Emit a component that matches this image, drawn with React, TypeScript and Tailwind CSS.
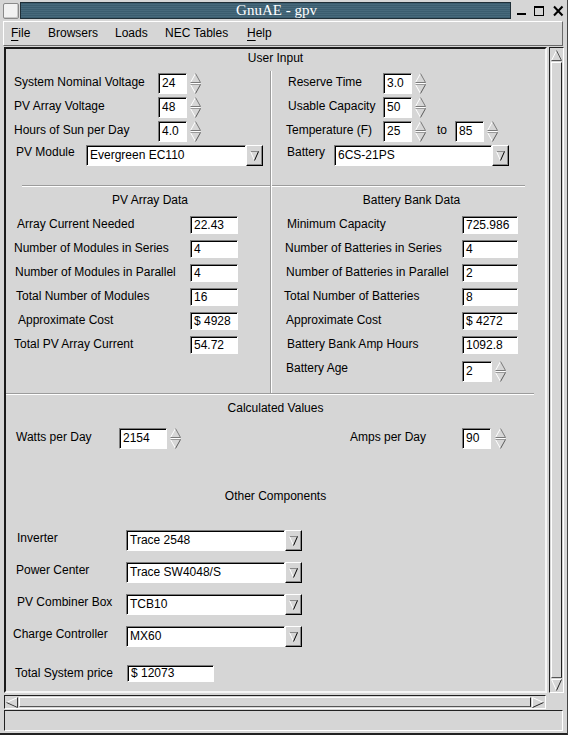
import React from "react";

function Field({ value, className }: { value: string; className: string }) {
  return (
    <div
      className={`flex items-center bg-white border border-t-[#7c7c7c] border-l-[#7c7c7c] border-b-white border-r-white shadow-[inset_1px_1px_0_#000] pl-[3px] leading-none overflow-hidden whitespace-nowrap ${className}`}
    >
      {value}
    </div>
  );
}

function Spin() {
  return (
    <svg width="11" height="21" viewBox="0 0 11 21" className="block shrink-0">
      <path d="M0.5 9.5 L5.5 0.5" stroke="#ffffff" fill="none" />
      <path d="M5.5 0.5 L10.5 9.5 L0.5 9.5" stroke="#7a7a7a" fill="none" />
      <path d="M0.5 10.5 L10.5 10.5" stroke="#ffffff" fill="none" />
      <path d="M0.5 11.5 L5.5 20.5" stroke="#ffffff" fill="none" />
      <path d="M0.5 11.5 L10.5 11.5" stroke="#9a9a9a" fill="none" />
      <path d="M10.5 11.5 L5.5 20.5" stroke="#5a5a5a" fill="none" />
    </svg>
  );
}

function ComboButton() {
  return (
    <div className="w-[17px] h-[21px] shrink-0 flex items-center justify-center bg-[#d6d6d6] border border-t-white border-l-white border-b-black border-r-black shadow-[inset_-1px_-1px_0_#8a8a8a]">
      <svg width="9" height="11" viewBox="0 0 9 11" className="block">
        <path d="M0.5 1.5 L8.5 1.5" stroke="#8a8a8a" fill="none" />
        <path d="M0.5 1.5 L4.5 10.5" stroke="#ffffff" fill="none" />
        <path d="M8.5 1.5 L4.5 10.5" stroke="#000000" fill="none" />
      </svg>
    </div>
  );
}

function Combo({ value, wide }: { value: string; wide: "pv" | "bat" | "comp" }) {
  const w = wide === "pv" ? "w-[160px]" : wide === "bat" ? "w-[158px]" : "w-[159px]";
  return (
    <div className="flex items-center">
      <Field value={value} className={`${w} h-[21px]`} />
      <ComboButton />
    </div>
  );
}

function Line({ className }: { className: string }) {
  return <div className={`h-[2px] bg-[#9c9c9c] border-b border-white ${className}`} />;
}

function SectionTitle({ children, className = "" }: { children: React.ReactNode; className?: string }) {
  return <div className={`h-[26px] flex items-center justify-center ${className}`}>{children}</div>;
}

function DataRow({ label, value, pad, labelW, fieldW }: { label: string; value: string; pad: string; labelW: string; fieldW: string }) {
  return (
    <div className="h-[24px] flex items-center">
      <div className={`${labelW} ${pad} mb-[2px] whitespace-nowrap`}>{label}</div>
      <Field value={value} className={`${fieldW} h-[18px]`} />
    </div>
  );
}

const pvData: [string, string, string][] = [
  ["Array Current Needed", "22.43", "pl-[11px]"],
  ["Number of Modules in Series", "4", "pl-[8px]"],
  ["Number of Modules in Parallel", "4", "pl-[9px]"],
  ["Total Number of Modules", "16", "pl-[10px]"],
  ["Approximate Cost", "$ 4928", "pl-[12px]"],
  ["Total PV Array Current", "54.72", "pl-[8px]"],
];

const batData: [string, string, string][] = [
  ["Minimum Capacity", "725.986", "pl-[15px]"],
  ["Number of Batteries in Series", "4", "pl-[13px]"],
  ["Number of Batteries in Parallel", "2", "pl-[14px]"],
  ["Total Number of Batteries", "8", "pl-[12px]"],
  ["Approximate Cost", "$ 4272", "pl-[14px]"],
  ["Battery Bank Amp Hours", "1092.8", "pl-[15px]"],
];

const components: [string, string, string][] = [
  ["Inverter", "Trace 2548", "pl-[11px]"],
  ["Power Center", "Trace SW4048/S", "pl-[10px]"],
  ["PV Combiner Box", "TCB10", "pl-[11px]"],
  ["Charge Controller", "MX60", "pl-[7px]"],
];

function LeftColumn() {
  return (
    <div className="w-[264px] flex flex-col">
      <div className="h-[24px] flex items-center">
        <div className="w-[152px] pl-[8px] mb-[3px] whitespace-nowrap">System Nominal Voltage</div>
        <Field value="24" className="w-[29px] h-[21px]" />
        <div className="ml-[3px]"><Spin /></div>
      </div>
      <div className="h-[24px] flex items-center">
        <div className="w-[152px] pl-[8px] mb-[3px] whitespace-nowrap">PV Array Voltage</div>
        <Field value="48" className="w-[29px] h-[21px]" />
        <div className="ml-[3px]"><Spin /></div>
      </div>
      <div className="h-[24px] flex items-center">
        <div className="w-[152px] pl-[8px] mb-[3px] whitespace-nowrap">Hours of Sun per Day</div>
        <Field value="4.0" className="w-[29px] h-[21px]" />
        <div className="ml-[3px]"><Spin /></div>
      </div>
      <div className="h-[24px] flex items-center">
        <div className="w-[80px] pl-[10px] mb-[6px] whitespace-nowrap">PV Module</div>
        <Combo value="Evergreen EC110" wide="pv" />
      </div>
      <Line className="mt-[18px] ml-[16px]" />
      <SectionTitle className="pl-[24px]">PV Array Data</SectionTitle>
      {pvData.map(([l, v, p]) => (
        <DataRow key={l} label={l} value={v} pad={p} labelW="w-[184px]" fieldW="w-[48px]" />
      ))}
    </div>
  );
}

function RightColumn() {
  return (
    <div className="flex-1 flex flex-col">
      <div className="h-[24px] flex items-center">
        <div className="w-[111px] pl-[16px] mb-[3px] whitespace-nowrap">Reserve Time</div>
        <Field value="3.0" className="w-[29px] h-[21px]" />
        <div className="ml-[3px]"><Spin /></div>
      </div>
      <div className="h-[24px] flex items-center">
        <div className="w-[111px] pl-[16px] mb-[3px] whitespace-nowrap">Usable Capacity</div>
        <Field value="50" className="w-[29px] h-[21px]" />
        <div className="ml-[3px]"><Spin /></div>
      </div>
      <div className="h-[24px] flex items-center">
        <div className="w-[111px] pl-[14px] mb-[3px] whitespace-nowrap">Temperature (F)</div>
        <Field value="25" className="w-[29px] h-[21px]" />
        <div className="ml-[3px]"><Spin /></div>
        <div className="w-[29px] pl-[11px] mb-[3px]">to</div>
        <Field value="85" className="w-[29px] h-[21px]" />
        <div className="ml-[3px]"><Spin /></div>
      </div>
      <div className="h-[24px] flex items-center">
        <div className="w-[62px] pl-[15px] mb-[6px] whitespace-nowrap">Battery</div>
        <Combo value="6CS-21PS" wide="bat" />
      </div>
      <Line className="mt-[18px] mr-[20px]" />
      <SectionTitle className="pl-[6px]">Battery Bank Data</SectionTitle>
      {batData.map(([l, v, p]) => (
        <DataRow key={l} label={l} value={v} pad={p} labelW="w-[190px]" fieldW="w-[56px]" />
      ))}
      <div className="h-[24px] flex items-center">
        <div className="w-[190px] pl-[14px] mb-[2px] whitespace-nowrap">Battery Age</div>
        <Field value="2" className="w-[30px] h-[21px] mt-[4px]" />
        <div className="ml-[3px] mt-[4px]"><Spin /></div>
      </div>
    </div>
  );
}

function TitleBar() {
  return (
    <div className="h-[21px] flex items-start pt-[2px] pl-[3px]">
      <div className="w-[16px] h-[16px] mt-[1px] bg-[#f2f2f2] border border-[#8a8a8a] rounded-[2px] shadow-[inset_-1px_-1px_0_#c8c8c8]" />
      <div className="ml-[1px] w-[491px] h-[17px] border border-[#1f2f38] bg-[repeating-linear-gradient(180deg,#3b5d6f_0px,#3b5d6f_1px,#47697b_1px,#47697b_2px)] flex items-center justify-center pl-[22px] text-white text-[15px] font-['Liberation_Serif',serif] leading-none">
        GnuAE - gpv
      </div>
      <div className="ml-[6px] flex items-start">
        <svg width="10" height="16" viewBox="0 0 10 16" className="block">
          <rect x="0" y="11" width="9" height="2" fill="#000" />
        </svg>
        <svg width="11" height="16" viewBox="0 0 11 16" className="block ml-[7px]">
          <rect x="0.5" y="4.5" width="9" height="9" stroke="#000" fill="none" />
          <rect x="0" y="4" width="10" height="2" fill="#000" />
        </svg>
        <svg width="11" height="16" viewBox="0 0 11 16" className="block ml-[8px]">
          <path d="M1 4.5 L9.5 13.5 M9.5 4.5 L1 13.5" stroke="#000" strokeWidth="2" fill="none" />
        </svg>
      </div>
    </div>
  );
}

function MenuBar() {
  return (
    <div className="ml-[3px] w-[560px] h-[25px] border border-t-white border-l-white border-b-[#6a6a6a] border-r-[#6a6a6a] flex items-center pb-[2px]">
      <div className="w-[44px] pl-[7px]">
        <span className="underline underline-offset-[3px] decoration-1">F</span>ile
      </div>
      <div className="w-[67px]">Browsers</div>
      <div className="w-[50px]">Loads</div>
      <div className="w-[82px]">NEC Tables</div>
      <div>
        <span className="underline underline-offset-[3px] decoration-1">H</span>elp
      </div>
    </div>
  );
}

function VScroll() {
  return (
    <div className="ml-[2px] w-[15px] h-[646px] border border-t-[#222] border-l-[#222] border-b-white border-r-white flex flex-col px-[1px] pt-[2px] pb-[1px]">
      <svg width="11" height="11" viewBox="0 0 11 11" className="block shrink-0">
        <path d="M0.5 10.5 L5.5 0.5" stroke="#ffffff" fill="none" />
        <path d="M5.5 0.5 L10.5 10.5 L0.5 10.5" stroke="#555" fill="none" />
      </svg>
      <div className="flex-1 my-[1px] border border-t-white border-l-white border-b-[#555] border-r-[#222]" />
      <svg width="11" height="12" viewBox="0 0 11 12" className="block shrink-0">
        <path d="M0.5 0.5 L10.5 0.5" stroke="#ffffff" fill="none" />
        <path d="M0.5 0.5 L5.5 11.5" stroke="#ffffff" fill="none" />
        <path d="M10.5 0.5 L5.5 11.5" stroke="#222" fill="none" />
      </svg>
    </div>
  );
}

function HScroll() {
  return (
    <div className="mt-[2px] ml-[4px] w-[542px] h-[14px] border border-t-[#222] border-l-[#222] border-b-white border-r-white flex items-center px-[1px]">
      <svg width="12" height="11" viewBox="0 0 12 11" className="block shrink-0">
        <path d="M11.5 0.5 L0.5 5.5 L11.5 10.5" stroke="#ffffff" fill="none" />
        <path d="M0.5 5.5 L11.5 10.5 L11.5 0.5" stroke="#333" fill="none" />
      </svg>
      <div className="flex-1 h-[10px] mx-[1px] border border-t-white border-l-white border-b-[#555] border-r-[#222]" />
      <svg width="12" height="11" viewBox="0 0 12 11" className="block shrink-0">
        <path d="M0.5 0.5 L11.5 5.5" stroke="#ffffff" fill="none" />
        <path d="M0.5 0.5 L0.5 10.5" stroke="#ffffff" fill="none" />
        <path d="M11.5 5.5 L0.5 10.5" stroke="#222" fill="none" />
      </svg>
    </div>
  );
}

export default function App() {
  return (
    <div className="w-[568px] h-[735px] bg-[#d6d6d6] border-b-2 border-b-[#222] border-r border-r-[#444] text-black text-[12px] font-['Liberation_Sans',Arial,sans-serif] leading-[14px] overflow-hidden flex flex-col">
      <TitleBar />
      <MenuBar />
      <div className="mt-[1px] flex">
        <div className="ml-[4px] w-[543px] h-[646px] border-2 border-t-[#1a1a1a] border-l-[#1a1a1a] border-b-[#f6f6f6] border-r-[#f6f6f6] flex flex-col">
          <div className="h-[17px] flex items-center justify-center">User Input</div>
          <div className="mt-[5px] h-[322px] flex">
            <LeftColumn />
            <div className="w-[2px] h-full bg-[#9c9c9c] border-r border-white" />
            <RightColumn />
          </div>
          <Line className="mr-[11px]" />
          <SectionTitle>Calculated Values</SectionTitle>
          <div className="mt-[5px] h-[24px] flex items-center">
            <div className="w-[113px] pl-[10px] mb-[3px] whitespace-nowrap">Watts per Day</div>
            <Field value="2154" className="w-[48px] h-[21px]" />
            <div className="ml-[3px]"><Spin /></div>
            <div className="ml-[169px] w-[112px] mb-[3px] whitespace-nowrap">Amps per Day</div>
            <Field value="90" className="w-[29px] h-[21px]" />
            <div className="ml-[4px]"><Spin /></div>
          </div>
          <SectionTitle className="mt-[33px]">Other Components</SectionTitle>
          <div className="mt-[15px] flex flex-col">
            {components.map(([l, v, p]) => (
              <div key={l} className="h-[32px] flex items-center">
                <div className={`w-[120px] ${p} mb-[5px] whitespace-nowrap`}>{l}</div>
                <Combo value={v} wide="comp" />
              </div>
            ))}
          </div>
          <div className="mt-[9px] h-[24px] flex items-center">
            <div className="w-[121px] pl-[9px] whitespace-nowrap">Total System price</div>
            <Field value="$ 12073" className="w-[87px] h-[17px]" />
          </div>
        </div>
        <VScroll />
      </div>
      <HScroll />
      <div className="mt-[1px] ml-[4px] w-[559px] h-[21px] border border-t-[#222] border-l-[#222] border-b-white border-r-white" />
    </div>
  );
}
